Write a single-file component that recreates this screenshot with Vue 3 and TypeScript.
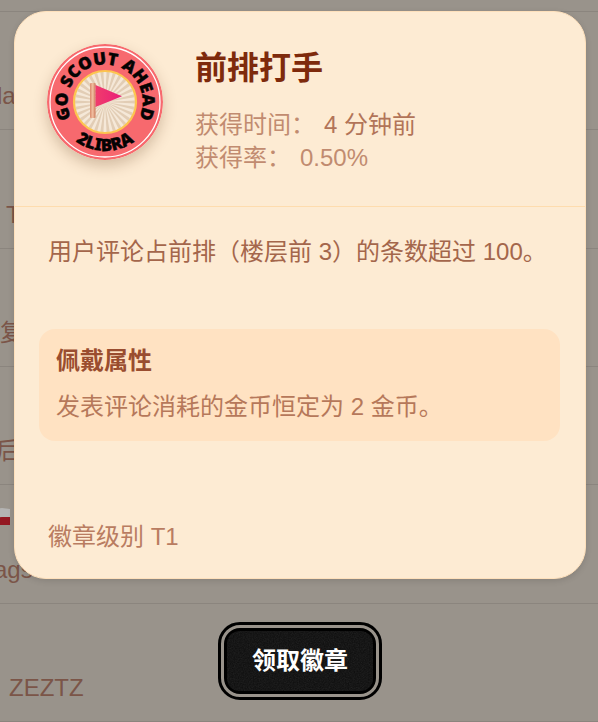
<script setup lang="ts">
interface Row {
  text: string
  indent: number
  flag?: boolean
}

const rows: Row[] = [
  { text: 'la', indent: -3 },
  { text: 'T', indent: 6 },
  { text: '复', indent: 0 },
  { text: '后', indent: -4 },
  { text: 'ags', indent: -6, flag: true },
  { text: 'ZEZTZ', indent: 9 },
]

const badge = {
  name: '前排打手',
  earned: '4 分钟前',
  rate: '0.50%',
  description: '用户评论占前排（楼层前 3）的条数超过 100。',
  perk: '发表评论消耗的金币恒定为 2 金币。',
  level: '徽章级别 T1',
}

const rays: string[] = Array.from({ length: 30 }, (_, i) => {
  const point = (deg: number): string => {
    const a = (deg * Math.PI) / 180
    return `${(58 + 30 * Math.cos(a)).toFixed(2)} ${(58 + 30 * Math.sin(a)).toFixed(2)}`
  }
  return `M58 58L${point(i * 12 - 3)}L${point(i * 12 + 3)}Z`
})
</script>

<template>
  <div class="page">
    <ul class="rows" aria-hidden="true">
      <li v-for="row in rows" :key="row.text" class="row">
        <svg v-if="row.flag" class="flag" viewBox="0 0 24 18">
          <path d="M0 1Q8 1 16 0L24 1V9H0Z" fill="#b4b3b2" />
          <path d="M0 9Q8 10 16 9H24V17H12Q6 18 0 18Z" fill="#941822" />
        </svg>
        <span :style="{ marginLeft: row.indent + 'px' }">{{ row.text }}</span>
      </li>
    </ul>

    <div class="overlay">
      <section class="card" role="dialog" aria-labelledby="badge-name">
        <header class="head">
          <svg class="medal" viewBox="0 0 116 116" role="img" aria-label="Go Scout Ahead">
            <defs>
              <path id="arc-top" d="M58 95.500A37.500 37.500 0 0 1 58 20.500A37.500 37.500 0 0 1 58 95.500" />
              <path id="arc-bottom" d="M9 58A49 49 0 0 0 107 58" />
              <linearGradient id="pole" x1="0" x2="1">
                <stop offset="0" stop-color="#d98a6c" />
                <stop offset=".5" stop-color="#f2c0a2" />
                <stop offset="1" stop-color="#c97858" />
              </linearGradient>
              <linearGradient id="pennant" x1="0" x2="1">
                <stop offset="0" stop-color="#f03c6c" />
                <stop offset="1" stop-color="#e91e78" />
              </linearGradient>
            </defs>
            <circle cx="58" cy="58" r="58" fill="#f7696e" />
            <circle cx="58" cy="58" r="55" fill="none" stroke="#fff" stroke-width="1.300" />
            <circle cx="58" cy="58" r="31" fill="#f5e8d8" />
            <path v-for="ray in rays" :key="ray" :d="ray" fill="#e2cdb5" />
            <circle cx="58" cy="58" r="31" fill="none" stroke="#fcc550" stroke-width="2.200" />
            <rect x="43" y="39" width="5.500" height="35" rx="1" fill="url(#pole)" />
            <path d="M48.500 41L75 52.300L48.500 63Z" fill="url(#pennant)" />
            <text class="medal-text"><textPath href="#arc-top" startOffset="50%">GO SCOUT AHEAD</textPath></text>
            <text class="medal-text"><textPath href="#arc-bottom" startOffset="50%">2LIBRA</textPath></text>
          </svg>
          <div class="summary">
            <h1 id="badge-name">{{ badge.name }}</h1>
            <dl>
              <div class="fact earned"><dt>获得时间：</dt><dd>{{ badge.earned }}</dd></div>
              <div class="fact"><dt>获得率：</dt><dd>{{ badge.rate }}</dd></div>
            </dl>
          </div>
        </header>
        <p class="description">{{ badge.description }}</p>
        <div class="perk">
          <h2>佩戴属性</h2>
          <p>{{ badge.perk }}</p>
        </div>
        <p class="level">{{ badge.level }}</p>
      </section>

      <button class="claim" type="button">
        <svg class="grain" aria-hidden="true">
          <filter id="noise"><feTurbulence type="fractalNoise" baseFrequency="0.8" numOctaves="3" /><feColorMatrix type="saturate" values="0" /></filter>
          <rect width="100%" height="100%" filter="url(#noise)" />
        </svg>
        <span>领取徽章</span>
      </button>
    </div>
  </div>
</template>

<style>
body {
  margin: 0;
  background: #99938b;
}
</style>

<style scoped>
.page {
  position: relative;
  min-height: 100vh;
  display: grid;
  overflow: hidden;
  box-sizing: border-box;
  padding-top: 11px;
  font-family: "Liberation Sans", "Noto Sans CJK SC", sans-serif;
  font-size: 24px;
  line-height: 32px;
}
h1, h2, p, dl, dd, ul {
  margin: 0;
}
.rows {
  list-style: none;
  padding: 0;
  display: grid;
  grid-template-rows: repeat(6, 1fr);
  border-top: 1px solid #8b857e;
  color: #7b5548;
}
.row {
  display: flex;
  flex-direction: column;
  justify-content: flex-end;
  align-items: flex-start;
  gap: 28px;
  padding-bottom: 17px;
  border-bottom: 1px solid #8b857e;
}
.flag {
  width: 24px;
  height: 18px;
  margin-left: -14px;
}
.overlay {
  position: absolute;
  inset: 0;
  padding: 11px 12px 23px 14px;
  display: flex;
  flex-direction: column;
  align-items: center;
  justify-content: space-between;
}
.card {
  width: 100%;
  box-sizing: border-box;
  border: 1px solid #fee0bb;
  border-radius: 32px;
  background: #fdebd3;
  box-shadow: 0 2px 6px rgba(0, 0, 0, 0.12);
}
.head {
  display: flex;
  gap: 32px;
  padding: 32px;
  border-bottom: 1px solid #fedcae;
}
.medal {
  flex: none;
  width: 116px;
  height: 116px;
  border-radius: 50%;
  box-shadow: 0 6px 14px rgba(90, 50, 20, 0.25);
}
.medal-text {
  font-family: "Noto Sans", sans-serif;
  font-weight: 900;
  font-size: 17px;
  text-anchor: middle;
  fill: #050303;
  stroke: #050303;
  stroke-width: 0.4px;
}
h1 {
  margin-bottom: 16px;
  color: #7e2a0c;
  font-size: 32px;
  line-height: 48px;
  font-weight: 700;
}
.fact {
  display: flex;
  gap: 9px;
  line-height: 33px;
  color: #c18b70;
}
.earned dd {
  color: #b27458;
}
.description {
  padding: 29px 33px 61px;
  color: #a4664b;
}
.perk {
  margin: 0 25px 0 24px;
  padding: 16px 17px 18px;
  border-radius: 16px;
  background: #ffe2c2;
}
h2 {
  margin-bottom: 14px;
  color: #9a4d2f;
  font-size: 24px;
  line-height: 32px;
  font-weight: 700;
}
.perk p {
  color: #b6785a;
}
.level {
  padding: 80px 33px 25px;
  color: #b97c61;
}
.claim {
  position: relative;
  padding: 14px 25px;
  margin-bottom: 5px;
  border: 3px solid #000;
  border-radius: 16px;
  background: #0c0c0c;
  color: #fff;
  font-family: inherit;
  font-size: 24px;
  font-weight: 700;
  line-height: 32px;
  outline: 3px solid #000;
  outline-offset: 3px;
}
.claim span {
  position: relative;
}
.grain {
  position: absolute;
  inset: 0;
  width: 100%;
  height: 100%;
  border-radius: 12px;
  opacity: 0.12;
}
</style>
